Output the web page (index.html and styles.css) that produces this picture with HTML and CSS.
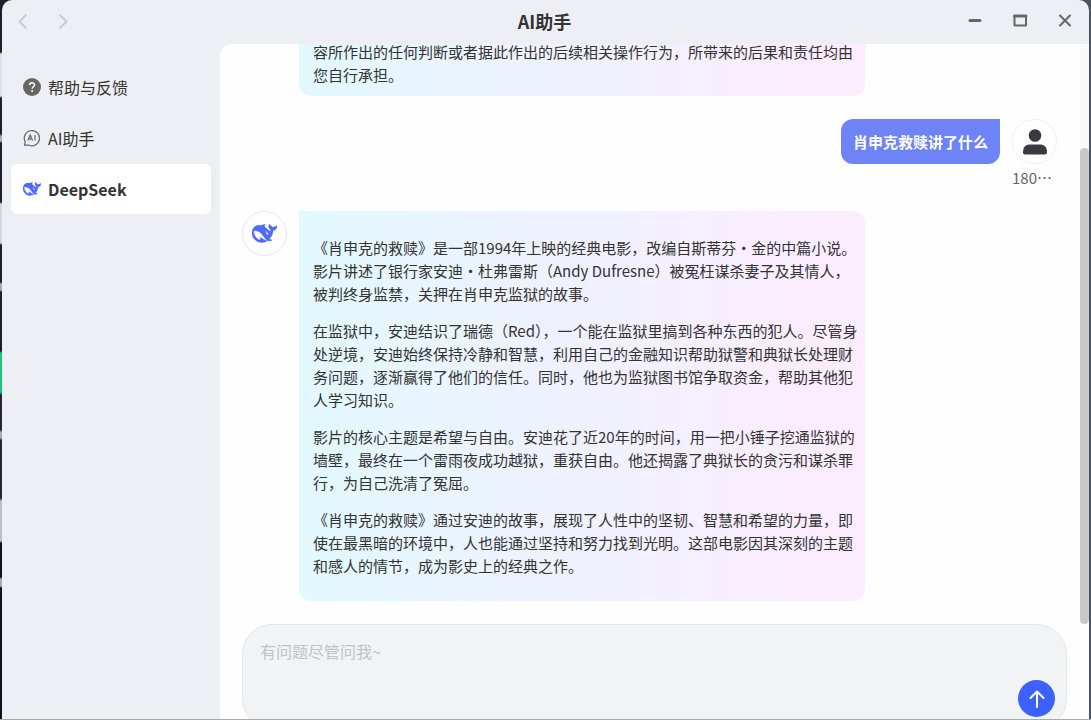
FILE: index.html
```html
<!doctype html>
<html lang="zh-CN">
	<head>
		<title>AI助手</title>
		<meta charset="utf-8">
		<link rel="stylesheet" href="styles.css">
	</head>
	<body>
		<div class="window">

			<!-- 标题栏 -->
			<header class="titlebar">
				<div class="history">
					<button type="button" aria-label="后退"><svg width="18" height="18" viewBox="0 0 18 18"><path d="M12 3L5.500 9.500L12 16"/></svg></button>
					<button type="button" aria-label="前进"><svg width="18" height="18" viewBox="0 0 18 18"><path d="M6 3L12.500 9.500L6 16"/></svg></button>
				</div>
				<h1>AI助手</h1>
				<div class="controls">
					<button type="button" aria-label="最小化"><svg width="18" height="18" viewBox="0 0 18 18"><path d="M3 8.500H13" stroke-width="3"/></svg></button>
					<button type="button" aria-label="最大化"><svg width="18" height="18" viewBox="0 0 18 18"><path d="M2.500 4H14V13.500H2.500Z"/><path d="M2.500 4H14" stroke-width="3"/></svg></button>
					<button type="button" aria-label="关闭"><svg width="18" height="18" viewBox="0 0 18 18"><path d="M3 3.500L13 13.500M13 3.500L3 13.500"/></svg></button>
				</div>
			</header>

			<div class="content">

				<!-- 左侧导航 -->
				<nav class="sidebar">
					<a href="#help">
						<svg width="18" height="18" viewBox="0 0 18 18"><circle cx="9" cy="9" r="9" fill="#666"/><path d="M6.600 7C6.600 3.900 11.500 3.900 11.500 6.900C11.500 8.700 9.100 8.800 9.100 10.700" fill="none" stroke="#fff" stroke-width="1.500"/><circle cx="9.100" cy="13" r="1" fill="#fff"/></svg>
						<span>帮助与反馈</span>
					</a>
					<a href="#ai">
						<svg width="18" height="18" viewBox="0 0 18 18" fill="none" stroke="#666" stroke-width="1.200"><path d="M1.500 16.200L2.200 12.800A7.600 7.600 0 1 1 6 16.200Z" stroke-linejoin="round"/><path d="M4.800 11.500L7.200 6L9.600 11.500M5.700 9.800H8.700M12 6V11.500"/></svg>
						<span>AI助手</span>
					</a>
					<a href="#deepseek" class="active">
						<svg class="whale" width="18" height="18" viewBox="0 0 24 24"><use href="#whale"/></svg>
						<span>DeepSeek</span>
					</a>
				</nav>

				<!-- 聊天区 -->
				<main class="chat">
					<div class="conversation">
						<div class="messages">
							<div class="message continued">
								<div class="bubble">容所作出的任何判断或者据此作出的后续相关操作行为，所带来的后果和责任均由您自行承担。</div>
							</div>

							<div class="message mine">
								<div class="bubble">肖申克救赎讲了什么</div>
								<div class="user">
									<div class="avatar"><svg width="26" height="26" viewBox="0 0 26 26" fill="#3b3a42"><circle cx="13" cy="6.500" r="6.300"/><path d="M1 23.500C1 17.500 4 15.500 8 15.500H18C22 15.500 25 17.500 25 23.500Q25 25.500 23 25.500H3Q1 25.500 1 23.500Z"/></svg></div>
									<span>180…</span>
								</div>
							</div>

							<div class="message">
								<div class="avatar"><svg class="whale" width="25" height="25" viewBox="0 0 24 24"><use href="#whale"/></svg></div>
								<div class="bubble">
									<p>《肖申克的救赎》是一部1994年上映的经典电影，改编自斯蒂芬・金的中篇小说。影片讲述了银行家安迪・杜弗雷斯（Andy Dufresne）被冤枉谋杀妻子及其情人，被判终身监禁，关押在肖申克监狱的故事。</p>
									<p>在监狱中，安迪结识了瑞德（Red），一个能在监狱里搞到各种东西的犯人。尽管身处逆境，安迪始终保持冷静和智慧，利用自己的金融知识帮助狱警和典狱长处理财务问题，逐渐赢得了他们的信任。同时，他也为监狱图书馆争取资金，帮助其他犯人学习知识。</p>
									<p>影片的核心主题是希望与自由。安迪花了近20年的时间，用一把小锤子挖通监狱的墙壁，最终在一个雷雨夜成功越狱，重获自由。他还揭露了典狱长的贪污和谋杀罪行，为自己洗清了冤屈。</p>
									<p>《肖申克的救赎》通过安迪的故事，展现了人性中的坚韧、智慧和希望的力量，即使在最黑暗的环境中，人也能通过坚持和努力找到光明。这部电影因其深刻的主题和感人的情节，成为影史上的经典之作。</p>
								</div>
							</div>
						</div>
						<div class="scrollbar"><div class="thumb"></div></div>
					</div>

					<!-- 输入框 -->
					<form class="composer">
						<textarea aria-label="输入问题" placeholder="有问题尽管问我~"></textarea>
						<button type="button" aria-label="发送"><svg width="20" height="20" viewBox="0 0 20 20"><path d="M10 18V3M3.500 9L10 2.500L16.500 9"/></svg></button>
					</form>
				</main>
			</div>
		</div>

		<svg class="symbols" aria-hidden="true">
			<symbol id="whale" viewBox="0 0 24 24"><path d="M23.748 4.482c-.254-.124-.364.113-.512.234-.051.039-.094.09-.137.136-.372.397-.806.657-1.373.626-.829-.046-1.537.214-2.163.848-.133-.782-.575-1.248-1.247-1.548-.352-.156-.708-.311-.955-.65-.172-.241-.219-.51-.305-.774-.055-.16-.11-.323-.293-.35-.2-.031-.278.136-.356.276-.313.572-.434 1.202-.422 1.84.027 1.436.633 2.58 1.838 3.393.137.093.172.187.129.323-.082.28-.18.552-.266.833-.055.179-.137.217-.329.14a5.526 5.526 0 01-1.736-1.18c-.857-.828-1.631-1.742-2.597-2.458a11.365 11.365 0 00-.689-.471c-.985-.957.13-1.743.388-1.836.27-.098.093-.432-.779-.428-.872.004-1.67.295-2.687.684a3.055 3.055 0 01-.465.137 9.597 9.597 0 00-2.883-.102c-1.885.21-3.39 1.102-4.497 2.623C.082 8.606-.231 10.684.152 12.85c.403 2.284 1.569 4.175 3.36 5.653 1.858 1.533 3.997 2.284 6.438 2.14 1.482-.085 3.133-.284 4.994-1.86.47.234.962.327 1.78.397.63.059 1.236-.03 1.705-.128.735-.156.684-.837.419-.961-2.155-1.004-1.682-.595-2.113-.926 1.096-1.296 2.746-2.642 3.392-7.003.05-.347.007-.565 0-.845-.004-.17.035-.237.23-.256a4.173 4.173 0 001.545-.475c1.396-.763 1.96-2.015 2.093-3.517.02-.23-.004-.467-.247-.588zM11.581 18c-2.089-1.642-3.102-2.183-3.52-2.16-.392.024-.321.471-.235.763.09.288.207.486.371.739.114.167.192.416-.113.603-.673.416-1.842-.14-1.897-.167-1.361-.802-2.5-1.86-3.301-3.307-.774-1.393-1.224-2.887-1.298-4.482-.02-.386.093-.522.477-.592a4.696 4.696 0 011.529-.039c2.132.312 3.946 1.265 5.468 2.774.868.86 1.525 1.887 2.202 2.891.72 1.066 1.494 2.082 2.48 2.914.348.292.625.514.891.677-.802.09-2.14.11-3.054-.614zm1-6.44a.306.306 0 01.415-.287.302.302 0 01.2.288.306.306 0 01-.31.307.303.303 0 01-.304-.308zm3.11 1.596c-.2.081-.399.151-.59.16a1.245 1.245 0 01-.798-.254c-.274-.23-.47-.358-.552-.758a1.73 1.73 0 01.016-.588c.07-.327-.008-.537-.239-.727-.187-.156-.426-.199-.688-.199a.559.559 0 01-.254-.078c-.11-.054-.2-.19-.114-.358.028-.054.16-.186.192-.21.356-.202.767-.136 1.146.016.352.144.618.408 1.001.782.391.451.462.576.685.914.176.265.336.537.445.848.067.195-.019.354-.25.452z"/></symbol>
		</svg>
	</body>
</html>
```
FILE: styles.css
```css
*{
	box-sizing:border-box;
}
body{
	margin:0px;
	padding:0px 2px 1px 2px;
	height:100vh;
	overflow:hidden;
	font-family:"Noto Sans CJK SC",sans-serif;
	color:#333;
	/** 窗口后面的桌面,只露出左右边缘 **/
	background:
		linear-gradient(#aaa,#aaa) bottom / 100% 1px no-repeat,
		linear-gradient(#1e2030 52px,#dde0e2 54px 96px,#1e2030 98px 134px,#aab 136px 141px,#1e2030 143px 202px,#cdd8e0 204px 243px,#1e1e2c 245px 282px,#aab 284px 290px,#1e1e2c 292px 351px,#1fc47c 353px 392px,#242638 395px 430px,#aab 432px 438px,#242638 440px 498px,#b5c0c4 501px 541px,#12121a 543px 577px,#aab 579px 586px,#12121a 588px) left / 50% 100% no-repeat,
		#4c525e;
}
button{
	display:flex;
	align-items:center;
	justify-content:center;
	padding:0px;
	border:0px;
	background:none;
}
svg{
	display:block;
	flex:none;
}
.symbols{
	display:none;
}
.whale{
	fill:#4d6bfe;
	stroke:#4d6bfe;
	stroke-width:0.4;
}

.window{
	height:100%;
	display:flex;
	flex-direction:column;
	overflow:hidden;
	border-radius:10px 10px 0px 0px;
	background:#eeeff5;
}

/** 标题栏 **/
.titlebar{
	flex:none;
	height:44px;
	display:grid;
	grid-template-columns:1fr auto 1fr;
	align-items:center;
	padding:0px 14px 2px 12px;
}
.titlebar h1{
	margin:0px;
	font-size:18px;
	line-height:24px;
}
.titlebar svg{
	fill:none;
	stroke:#666;
	stroke-width:2;
	stroke-linecap:round;
	stroke-linejoin:round;
}
.history{
	display:flex;
	gap:22px;
}
.history svg{
	stroke:#ccc;
}
.controls{
	display:flex;
	justify-content:flex-end;
	gap:27px;
}

.content{
	flex:1;
	min-height:0px;
	display:flex;
}

/** 左侧导航 **/
.sidebar{
	flex:none;
	width:218px;
	display:flex;
	flex-direction:column;
	gap:1px;
	padding:18px 9px;
}
.sidebar a{
	height:50px;
	display:flex;
	align-items:center;
	gap:7px;
	padding:0px 11px 0px 12px;
	border-radius:6px;
	font-size:16px;
	color:#333;
	text-decoration:none;
}
.sidebar .active{
	background:#fff;
	font-weight:bold;
}

/** 聊天区 **/
.chat{
	flex:1;
	min-width:0px;
	display:flex;
	flex-direction:column;
	overflow:hidden;
	border-radius:12px 0px 0px 0px;
	background:#fefefe;
}
.conversation{
	flex:1;
	min-height:0px;
	display:flex;
	overflow:hidden;
}
.messages{
	flex:1;
	display:flex;
	flex-direction:column;
	justify-content:flex-end;	/** 停在最新一条消息 **/
	gap:23px;
	padding:0px 23px 23px 22px;
}
.message{
	display:flex;
	align-items:flex-start;
	gap:12px;
}
.continued{
	padding-left:57px;			/** 头像已滚出可视区 **/
}
.mine{
	justify-content:flex-end;
}
.avatar{
	flex:none;
	width:45px;
	height:45px;
	display:flex;
	align-items:center;
	justify-content:center;
	border:1px solid #e6e4fa;
	border-radius:50%;
	background:#fff;
}
.bubble{
	max-width:566px;
	display:flow-root;
	padding:11px 5px 10px 14px;
	border-radius:0px 12px 12px 12px;
	background:linear-gradient(to right,#e2f8ff,#f0f1ff 50%,#fdecff);
	font-size:15px;
	line-height:23px;
}
.bubble p{
	margin:14px 0px;
}
.mine .bubble{
	padding:11px 12px;
	border-radius:12px 0px 12px 12px;
	background:#6e83f6;
	color:#fff;
	font-weight:bold;
}
.mine .avatar{
	border-color:#eee;
}
.user span{
	display:block;
	margin-top:4px;
	font-size:15px;
	line-height:20px;
	color:#666;
}

/** 滚动条 **/
.scrollbar{
	flex:none;
	width:9px;
	display:flex;
	align-items:flex-end;
	border-radius:5px;
	background:#f9f9f9;
}
.thumb{
	width:100%;
	height:82%;
	border-radius:5px;
	background:#c8c8c8;
}

/** 输入框,底部超出窗口 **/
.composer{
	flex:none;
	height:105px;
	display:flex;
	align-items:flex-end;
	margin:0px 22px -10px 22px;
	padding:14px 11px 11px 17px;
	border:1px solid #e3e5ee;
	border-radius:30px;
	background:#f2f3f5;
}
.composer textarea{
	flex:1;
	align-self:stretch;
	padding:0px;
	border:0px;
	outline:0px;
	resize:none;
	background:none;
	font-family:inherit;
	font-size:16px;
	line-height:24px;
}
.composer textarea::placeholder{
	color:#c0c2cc;
}
.composer button{
	width:37px;
	height:37px;
	border-radius:50%;
	background:#3b62fe;
}
.composer button svg{
	fill:none;
	stroke:#fff;
	stroke-width:2;
	stroke-linecap:round;
	stroke-linejoin:round;
}
```
